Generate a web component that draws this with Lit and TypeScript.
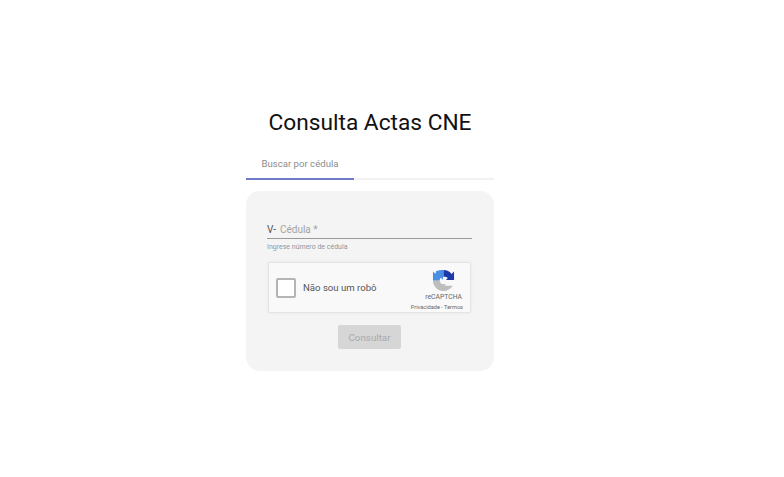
import { LitElement, html, css } from "lit";
import { customElement } from "lit/decorators.js";

@customElement("app-root")
export class AppRoot extends LitElement {
  static styles = css`
    :host { display: block; width: 784px; height: 477px; background: #fff; font-family: Roboto, sans-serif; overflow: hidden; }
    .wrap { width: 248px; margin-left: 246px; padding-top: 108px; display: flex; flex-direction: column; }
    h1 { margin: 0; font-size: 22.7px; font-weight: 400; line-height: 30px; color: #111; text-align: center; }
    .tabs { margin-top: 10px; height: 30px; border-bottom: 2px solid #f2f2f2; display: flex; }
    .tab { width: 108px; height: 30px; margin-bottom: -2px; border-bottom: 2px solid #6f7bc9; font-size: 9.6px; font-weight: 400; color: #8c8c8c; display: flex; align-items: center; justify-content: center; }
    .card { margin-top: 11px; height: 180px; background: #f4f4f4; border-radius: 14px; padding: 0 21px; box-sizing: border-box; display: flex; flex-direction: column; }
    .field { margin-top: 30px; height: 17px; border-bottom: 1px solid #9a9a9a; display: flex; align-items: center; gap: 4px; font-size: 10px; line-height: 18px; width: 205px; }
    .prefix { color: #555; }
    .label { color: #a3a3a3; }
    .hint { margin-top: 3px; font-size: 7px; line-height: 10px; color: #9196a0; }
    .captcha { margin: 10px 0 0 1px; width: 203px; height: 51px; box-sizing: border-box; background: #f9f9f9; border: 1px solid #e4e4e4; border-radius: 2px; box-shadow: 0 0 3px rgba(0,0,0,.06); display: flex; align-items: center; padding-left: 7px; }
    .box { width: 16px; height: 16px; background: #fff; border: 2px solid #b4b4b4; border-radius: 2px; }
    .robot { margin-left: 7px; font-size: 9.6px; color: #555; flex: 1; }
    .brand { display: flex; flex-direction: column; align-items: flex-end; padding: 5px 7px 0 0; }
    .brand svg { display: block; width: 23px; height: 23px; margin-right: 8px; }
    .rc { font-size: 6.8px; line-height: 9px; color: #666; margin: 1px 1px 0 0; }
    .terms { font-size: 5.6px; line-height: 8px; color: #666; margin-top: 1px; white-space: nowrap; }
    .btn { align-self: flex-start; margin: 12px 0 0 71px; width: 63px; height: 24px; background: #d6d6d6; border-radius: 2px; color: #aaa; font-size: 9.8px; font-weight: 400; display: flex; align-items: center; justify-content: center; }
  `;

  render() {
    return html`
      <div class="wrap">
        <h1>Consulta Actas CNE</h1>
        <div class="tabs"><div class="tab">Buscar por cédula</div></div>
        <div class="card">
          <div class="field"><span class="prefix">V-</span><span class="label">Cédula *</span></div>
          <div class="hint">Ingrese número de cédula</div>
          <div class="captcha">
            <div class="box"></div>
            <div class="robot">Não sou um robô</div>
            <div class="brand">
              <svg viewBox="0 0 24 24">
                <path d="M1 12C1 18 6 23 12 23C16 23 19.500 20.800 21.500 17.500H13L15.800 14.500C15 15.500 13.600 16 12 16C9.800 16 8 14.200 8 12Z" fill="#bdbdbd"/>
                <path d="M1 2.500V12H8C8 10.800 8.500 9.800 9.300 9.100L11.500 11.500V6.500L4.500 2.500L3.500 5Z" fill="#4a90e2"/>
                <path d="M4 2.500C6 1.500 9 1 12 1V8C10.900 8 10 8.400 9.300 9.100L5 5Z" fill="#4a90e2"/>
                <path d="M12 1C15.500 1 18.500 2.600 20.500 5.200L23 2.700V11.500H14.500L16.500 9.500C15.800 8.500 14 8 12 8Z" fill="#1c3aa9"/>
              </svg>
              <div class="rc">reCAPTCHA</div>
              <div class="terms">Privacidade - Termos</div>
            </div>
          </div>
          <div class="btn">Consultar</div>
        </div>
      </div>
    `;
  }
}
